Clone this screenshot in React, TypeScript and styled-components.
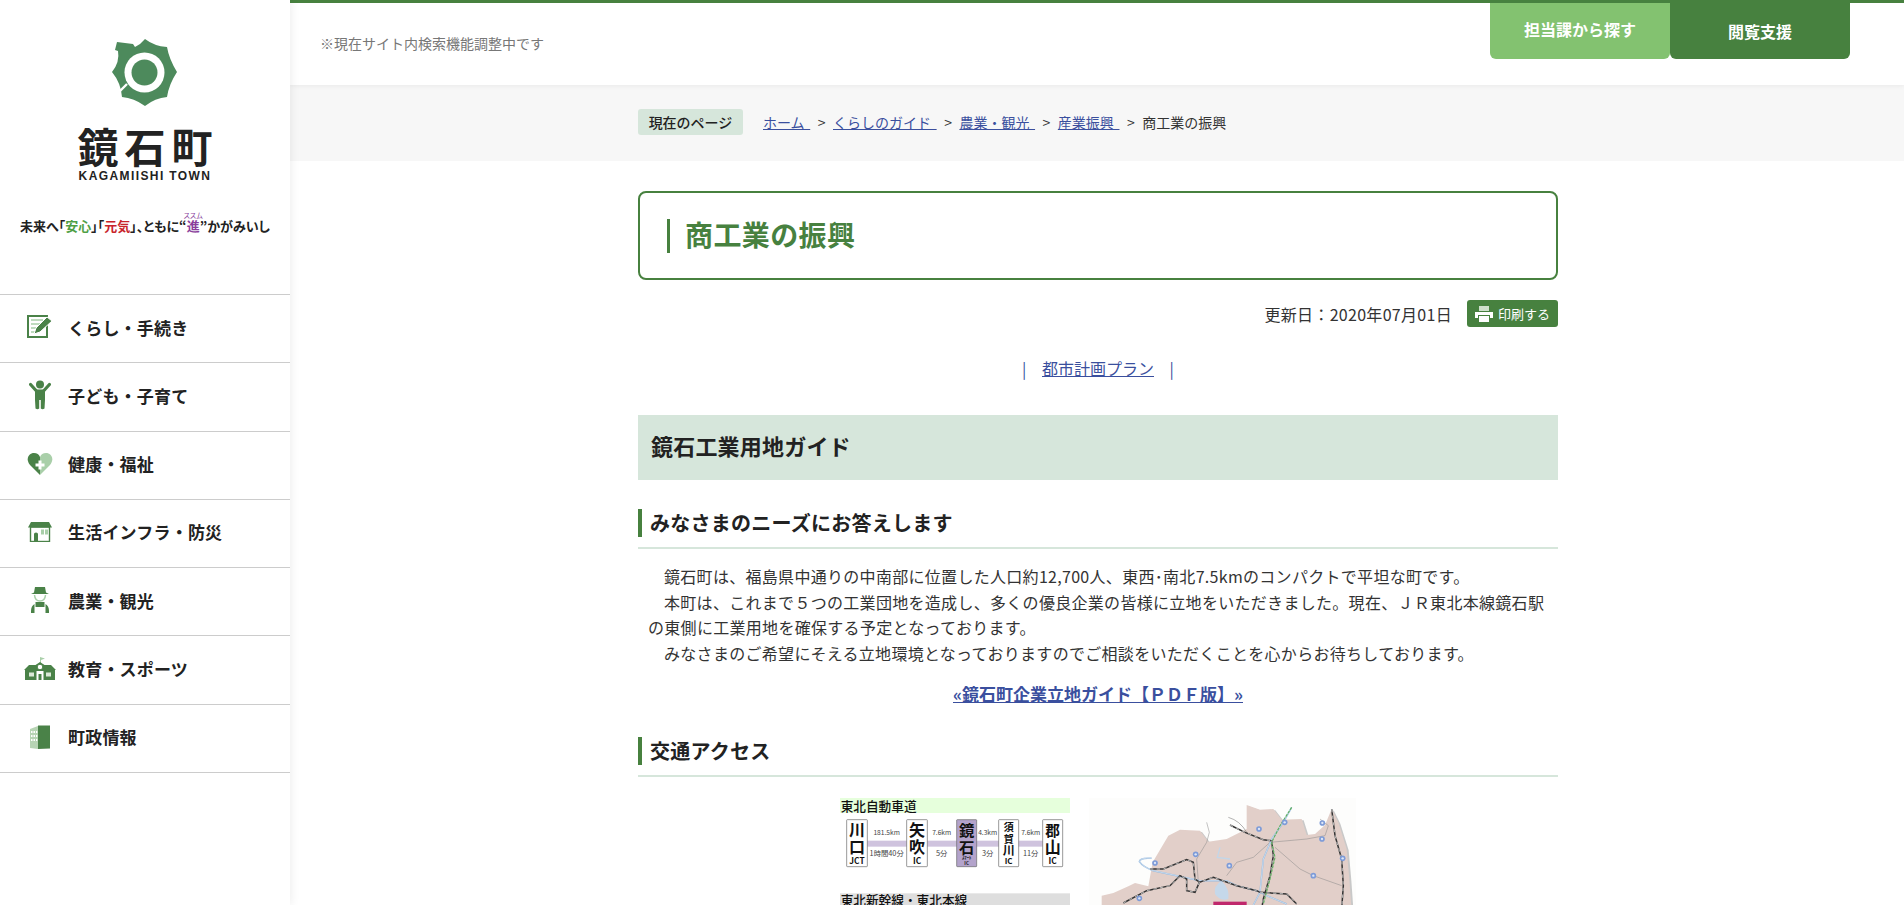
import React from "react";
import styled, { createGlobalStyle } from "styled-components";

const G = "#47813f";
const D = "#4a8248";
const L = "#a9cfa9";

const Global = createGlobalStyle`
  html, body { margin: 0; padding: 0; height: 100%; overflow: hidden; background: #fff; }
  body { font-family: "Noto Sans CJK JP", "Noto Sans", sans-serif; color: #333; }
  * { box-sizing: border-box; }
  a { color: #3a4f9e; }
`;

const Page = styled.div`
  display: flex;
  height: 905px;
  overflow: hidden;
`;
const Sidebar = styled.aside`
  width: 290px;
  flex: none;
  background: #fff;
  box-shadow: 0 0 10px rgba(0, 0, 0, 0.09);
  position: relative;
  z-index: 2;
  padding-top: 39px;
`;
const LogoBlock = styled.div`
  display: flex;
  flex-direction: column;
  align-items: center;
  height: 255px;
`;
const LogoName = styled.div`
  font-size: 41px;
  line-height: 44px;
  font-weight: 700;
  letter-spacing: 6px;
  margin: 16px 0 0 6px;
  color: #222;
`;
const LogoSub = styled.div`
  font-family: "Liberation Sans", sans-serif;
  font-size: 12px;
  line-height: 14px;
  font-weight: 700;
  letter-spacing: 1.4px;
  color: #222;
  margin-top: 2px;
`;
const Slogan = styled.div`
  font-size: 13px;
  line-height: 20px;
  font-weight: 700;
  font-feature-settings: "palt";
  color: #222;
  margin-top: 28px;
  white-space: nowrap;
`;
const Tone = styled.span<{ $c: string }>`
  color: ${(p) => p.$c};
`;
const Ruby = styled.ruby`
  color: #8a3f9c;
  rt {
    font-size: 7px;
    font-weight: 400;
    line-height: 7px;
  }
`;
const Nav = styled.nav`
  border-bottom: 1px solid #ccc;
`;
const NavRow = styled.a`
  display: flex;
  align-items: center;
  height: 68.25px;
  border-top: 1px solid #ccc;
  padding-bottom: 3px;
  color: #222;
  font-size: 17px;
  letter-spacing: 0.2px;
  font-weight: 700;
  text-decoration: none;
`;
const NavIcon = styled.span`
  width: 68px;
  flex: none;
  display: flex;
  justify-content: center;
  padding-left: 12px;
`;

const Main = styled.main`
  flex: 1;
  min-width: 0;
`;
const Header = styled.header`
  height: 85px;
  border-top: 3px solid ${G};
  display: flex;
  justify-content: space-between;
  background: #fff;
  padding: 0 54px 0 30px;
  box-shadow: 0 0 6px rgba(0, 0, 0, 0.08);
  position: relative;
`;
const Notice = styled.p`
  margin: 30px 0 0;
  font-size: 14px;
  line-height: 20px;
  color: #777;
`;
const Tabs = styled.div`
  display: flex;
  height: 56px;
`;
const Tab = styled.a<{ $bg: string; $pad: number }>`
  width: 180px;
  background: ${(p) => p.$bg};
  border-radius: 0 0 6px 6px;
  color: #fff;
  font-size: 16px;
  font-weight: 700;
  text-align: center;
  line-height: 20px;
  padding-top: ${(p) => p.$pad}px;
`;
const CrumbBand = styled.div`
  height: 76px;
  background: #f7f7f7;
  padding-left: 348px;
`;
const Crumbs = styled.div`
  width: 920px;
  height: 74px;
  display: flex;
  align-items: center;
  font-size: 14px;
  color: #333;
  white-space: pre;
`;
const Badge = styled.span`
  width: 105px;
  height: 26px;
  line-height: 26px;
  text-align: center;
  background: #d6e6db;
  border-radius: 3px;
  color: #222;
  font-size: 14px;
  font-weight: 500;
  margin-right: 20px;
`;
const CrumbLink = styled.a`
  word-spacing: 2.5px;
`;
const Sep = styled.span`
  margin: 0 7.5px;
`;

const Content = styled.div`
  width: 920px;
  margin-left: 348px;
  padding-top: 30px;
`;
const TitleBox = styled.div`
  height: 89px;
  border: 2px solid ${G};
  border-radius: 8px;
  display: flex;
  align-items: center;
  padding-left: 27px;
`;
const Title = styled.h1`
  margin: 0;
  border-left: 3px solid ${G};
  padding: 0 0 3px 15px;
  font-size: 28px;
  letter-spacing: 0.4px;
  line-height: 31px;
  font-weight: 700;
  color: ${G};
`;
const Meta = styled.div`
  display: flex;
  justify-content: flex-end;
  align-items: center;
  gap: 15px;
  margin-top: 20px;
  height: 27px;
  font-size: 16px;
  letter-spacing: 0.3px;
  color: #333;
`;
const PrintBtn = styled.a`
  width: 91px;
  height: 27px;
  background: ${G};
  border-radius: 3px;
  color: #fff;
  font-size: 13px;
  letter-spacing: 0;
  display: flex;
  align-items: center;
  justify-content: center;
  gap: 5px;
`;
const LinkLine = styled.p`
  margin: 28px 0 0;
  height: 26px;
  font-size: 16px;
  line-height: 26px;
  text-align: center;
  color: #3a4f9e;
  word-spacing: 12px;
`;
const Band = styled.h2`
  margin: 34px 0 0;
  height: 65px;
  background: #d6e6db;
  padding-left: 13px;
  font-size: 22px;
  letter-spacing: 0.2px;
  line-height: 61px;
  font-weight: 700;
  color: #222;
`;
const Section = styled.h3<{ $top: number }>`
  margin: ${(p) => p.$top}px 0 0;
  padding: 0 0 10px 0;
  border-bottom: 2px solid #d6e6db;
  font-size: 20px;
  letter-spacing: 0.25px;
  font-weight: 700;
  color: #222;
`;
const SectionText = styled.span`
  display: block;
  border-left: 4px solid ${G};
  padding-left: 8px;
  line-height: 28px;
`;
const Body = styled.div`
  padding: 15px 0 0 10px;
  font-size: 16px;
  line-height: 25.6px;
  letter-spacing: 0.3px;
  color: #333;
  white-space: nowrap;
`;
const Para = styled.p`
  margin: 0;
  text-indent: 16px;
`;
const PdfLink = styled.p`
  margin: 15px 0 0;
  text-align: center;
  font-size: 17px;
  line-height: 26px;
  font-weight: 700;
`;
const Figures = styled.div`
  display: flex;
  justify-content: center;
  gap: 19px;
  margin-top: 21px;
`;

const Logo = () => (
  <svg width="68" height="68" viewBox="0 0 68 68">
    <path
      fill="#4d8a5c"
      d="M34 0 Q43 7 56 8 Q58 20 66 33 Q58 45 56 58 Q44 59 34 67 Q23 59 11 58 Q10 44 1 33 Q9 23 7 12 L4 11 L6 3 L22 5 L24 8 Q30 5 34 0Z"
    />
    <circle cx="33.5" cy="33.5" r="20" fill="#fff" />
    <circle cx="33.5" cy="33.5" r="13" fill="#4d8a5c" />
    <path d="M16 45 L9 52" stroke="#fff" strokeWidth="2.4" />
  </svg>
);

const IconForm = () => (
  <svg width="27" height="24" viewBox="0 0 27 24">
    <rect x="1" y="1" width="19" height="21" fill="#fff" stroke={D} strokeWidth="2" />
    <path d="M4 5h12M4 9h9M4 13h6M4 17h4" stroke={L} strokeWidth="1.5" />
    <path d="M7 19 L9 13 L20 2 L25 6 L13 17Z" fill={D} stroke="#fff" strokeWidth="1" />
  </svg>
);
const IconChild = () => (
  <svg width="22" height="30" viewBox="0 0 22 30">
    <circle cx="11" cy="4.5" r="4" fill={D} />
    <path d="M1.6 4.5 L7 10.5 M20.4 4.5 L15 10.5" stroke={D} strokeWidth="3.2" strokeLinecap="round" />
    <path d="M6 9.5 H16 V20 L15.5 28.5 Q13.5 30 11.8 28.5 V20 H10.2 V28.5 Q8.5 30 6.5 28.5 L6 20Z" fill={D} />
  </svg>
);
const IconHeart = () => (
  <svg width="26" height="24" viewBox="0 0 26 24">
    <path d="M13 23 L3 13 C-2 7 2 1 7 1 C10 1 12 2.5 13 5Z" fill={D} />
    <path d="M13 23 L23 13 C28 7 24 1 19 1 C16 1 14 2.5 13 5Z" fill={L} />
    <path d="M11.5 8.5h3v3h3v3h-3v3h-3v-3h-3v-3h3z" fill="#fff" />
  </svg>
);
const IconShop = () => (
  <svg width="24" height="20" viewBox="0 0 24 20">
    <path d="M3 0H21L24 5.5H0Z" fill={D} />
    <rect x="2.5" y="5" width="19" height="14.5" fill="none" stroke={D} strokeWidth="1.4" />
    <path d="M6 19.5V12Q6 10.5 8 10.5Q10 10.5 10 12V19.5Z" fill={D} />
    <path d="M13 7.5h3v5h-3zM17 7.5h3v5h-3z" fill={L} />
  </svg>
);
const IconFarmer = () => (
  <svg width="18" height="26" viewBox="0 0 18 26">
    <path d="M4 0H14L15 5.5L18 7H0L3 5.5Z" fill={D} />
    <path d="M3.5 8Q4 14 9 14Q14 14 14.5 8" fill="none" stroke={L} strokeWidth="1.5" />
    <path d="M4.5 15H13.5V20H4.5Z" fill={D} />
    <path d="M3.5 17V26H0V24Q0 19 3.5 17ZM14.5 17V26H18V24Q18 19 14.5 17Z" fill={D} />
  </svg>
);
const IconSchool = () => (
  <svg width="32" height="23" viewBox="0 0 32 23">
    <path d="M16 6V0L21 1.5L17 3V6Z" fill={L} />
    <path d="M16 5L20.5 8H27L32 13H0L5 8H11.5Z" fill={D} />
    <rect x="1" y="13" width="30" height="10" fill={D} />
    <circle cx="16" cy="10" r="2.8" fill="#fff" stroke={D} />
    <path d="M12.5 23V14H19.5V23Z" fill="#fff" />
    <path d="M14.5 23V17H17.5V23Z" fill={D} />
    <path d="M5 15.5h5v4H5zM22 15.5h5v4h-5z" fill="#dbe9d8" />
  </svg>
);
const IconBuilding = () => (
  <svg width="20" height="24" viewBox="0 0 20 24">
    <path d="M0 4L8 1V24L0 23Z" fill="#b7d4b4" />
    <path d="M8 0.5L20 .5V23.5L8 24Z" fill={D} />
    <path
      d="M1 6h1.5v2H1zM3.5 6H5v2H3.5zM6 6h1.3v2H6zM1 10h1.5v2H1zM3.5 10H5v2H3.5zM6 10h1.3v2H6zM1 14h1.5v2H1zM3.5 14H5v2H3.5zM6 14h1.3v2H6z"
      fill="#fff"
    />
  </svg>
);
const IconPrint = () => (
  <svg width="18" height="16" viewBox="0 0 18 16">
    <path d="M4 0H14V5H4Z" fill="#cfe0cc" />
    <path d="M0 6H18V12H15V9H3V12H0Z" fill="#fff" />
    <path d="M4 10H14V16H4Z" fill="#fff" />
  </svg>
);

const Box = ({ x, w, lines, fill = "#fff" }: { x: number; w: number; lines: [string, number, number][]; fill?: string }) => (
  <g>
    <rect x={x} y="122" width={w} height="141" fill={fill} stroke="#666" strokeWidth="2" rx="2" />
    {lines.map(([t, y, s], i) => (
      <text key={i} x={x + w / 2} y={y} fontSize={s} fontWeight="700" textAnchor="middle" fill="#111">
        {t}
      </text>
    ))}
  </g>
);
const Span = ({ x, a, b }: { x: number; a: string; b: string }) => (
  <g>
    <text x={x} y="167" fontSize="20" textAnchor="middle" fill="#444">{a}</text>
    <text x={x} y="232" fontSize="22" textAnchor="middle" fill="#444">{b}</text>
  </g>
);
const Diagram = () => (
  <svg width="230" height="107" viewBox="60 57 690 321" fontFamily='"Noto Sans CJK JP", sans-serif'>
    <rect x="60" y="57" width="690" height="45" fill="#e6ffdc" />
    <text x="62" y="95" fontSize="38" fontWeight="500" fill="#111">東北自動車道</text>
    <rect x="140" y="185" width="530" height="18" fill="#cfc3de" />
    <Span x="200" a="181.5km" b="1時間40分" />
    <Span x="365" a="7.6km" b="5分" />
    <Span x="503" a="4.3km" b="3分" />
    <Span x="632" a="7.6km" b="11分" />
    <Box x={80} w={62} lines={[["川", 172, 48], ["口", 222, 48], ["JCT", 256, 25]]} />
    <Box x={260} w={62} lines={[["矢", 172, 48], ["吹", 222, 48], ["IC", 254, 25]]} />
    <Box x={410} w={60} fill="#b3a3cb" lines={[["鏡", 172, 46], ["石", 222, 46], ["ｽﾏｰﾄ", 240, 14], ["IC", 258, 14]]} />
    <Box x={536} w={60} lines={[["須", 156, 30], ["賀", 192, 30], ["川", 228, 36], ["IC", 256, 24]]} />
    <Box x={668} w={60} lines={[["郡", 172, 44], ["山", 222, 48], ["IC", 254, 25]]} />
    <rect x="60" y="343" width="690" height="40" fill="#dedede" />
    <text x="62" y="378" fontSize="38" fontWeight="500" fill="#111">東北新幹線・東北本線</text>
  </svg>
);

const LAND =
  "M65 350 L100 342 L145 322 L165 312 L205 322 L218 250 L265 170 L300 152 L360 155 L385 188 L440 180 L500 150 L500 78 L540 92 L580 90 L605 122 L665 120 L680 168 L705 165 L735 138 L755 90 L775 130 L800 210 L808 300 L815 400 L65 400Z";
const RAILS = [
  "M450 138 L495 160 L550 182 L575 185",
  "M575 185 L580 230 L570 290 L550 360 L545 390",
  "M755 90 L765 170 L785 240 L790 320 L785 390",
  "M210 270 L250 270 L320 242 L340 250 L345 300 L360 310",
  "M130 372 L200 335 L270 320 L300 290 L320 300 L320 335 L345 340 L358 310 L400 295 L470 320 L530 335 L540 340 L620 345 L650 375",
];
const WATER =
  "M635 85 L610 130 L575 180 L550 240 L540 340 L520 378 M215 238 Q180 235 178 248 Q190 265 220 275 L290 290 L360 305 L440 305 L470 320 L530 335 L560 350 L620 375";
const Map = () => (
  <svg width="267" height="107" viewBox="27 57 801 321">
    <rect x="27" y="57" width="801" height="321" fill="#fdfdfc" />
    <path d={LAND} fill="#c9c9c9" transform="translate(6 4)" />
    <path d={LAND} fill="#e2cfc9" />
    <path d="M380 130 L388 160 L380 190 L350 240 L355 310" fill="none" stroke="#888" strokeWidth="1.5" />
    <path d="M445 115 Q480 125 500 160" fill="none" stroke="#666" strokeWidth="1.5" />
    <path d="M440 290 L470 250 L520 235 L570 190 L680 180 L735 170 L745 140 L720 120" fill="none" stroke="#888" strokeWidth="1.5" />
    <path d="M585 205 L660 270 L700 290 L785 320" fill="none" stroke="#888" strokeWidth="1.5" />
    <path d="M420 205 L412 235 L450 240" fill="none" stroke="#c3d6e8" strokeWidth="4" />
    <path d="M425 305 Q400 320 405 345 Q420 368 445 360 Q450 330 425 305Z" fill="#c5d8ea" />
    <path d={WATER} fill="none" stroke="#8db4dc" strokeWidth="4.5" />
    <path d={WATER} fill="none" stroke="#fff" strokeWidth="1.5" />
    {RAILS.map((d) => (
      <g key={d}>
        <path d={d} fill="none" stroke="#333" strokeWidth="4.5" />
        <path d={d} fill="none" stroke="#fff" strokeWidth="2" strokeDasharray="10 10" />
      </g>
    ))}
    <path d="M635 85 L600 140 L575 190 L585 235 L570 300 L550 375" fill="none" stroke="#5fb060" strokeWidth="3.5" strokeDasharray="9 3" />
    {[[614, 130], [537, 150], [727, 132], [726, 180], [788, 238], [347, 226], [225, 252], [448, 260], [700, 290], [178, 358]].map(([x, y]) => (
      <g key={`${x}-${y}`}>
        <circle cx={x} cy={y} r="8.5" fill="#7d9bd8" />
        <circle cx={x} cy={y} r="3.5" fill="#dfe7f6" />
      </g>
    ))}
    <rect x="400" y="368" width="100" height="12" fill="#c0286c" />
  </svg>
);

export default function App() {
  return (
    <Page>
      <Global />
      <Sidebar>
        <LogoBlock>
          <Logo />
          <LogoName>鏡石町</LogoName>
          <LogoSub>KAGAMIISHI TOWN</LogoSub>
          <Slogan>
            未来へ「<Tone $c="#4f9f45">安心</Tone>」「<Tone $c="#c8242c">元気</Tone>」、ともに“
            <Ruby>
              進<rt>ススム</rt>
            </Ruby>
            ”かがみいし
          </Slogan>
        </LogoBlock>
        <Nav>
          <NavRow><NavIcon><IconForm /></NavIcon>くらし・手続き</NavRow>
          <NavRow><NavIcon><IconChild /></NavIcon>子ども・子育て</NavRow>
          <NavRow><NavIcon><IconHeart /></NavIcon>健康・福祉</NavRow>
          <NavRow><NavIcon><IconShop /></NavIcon>生活インフラ・防災</NavRow>
          <NavRow><NavIcon><IconFarmer /></NavIcon>農業・観光</NavRow>
          <NavRow><NavIcon><IconSchool /></NavIcon>教育・スポーツ</NavRow>
          <NavRow><NavIcon><IconBuilding /></NavIcon>町政情報</NavRow>
        </Nav>
      </Sidebar>
      <Main>
        <Header>
          <Notice>※現在サイト内検索機能調整中です</Notice>
          <Tabs>
            <Tab $bg="#83c270" $pad={16}>担当課から探す</Tab>
            <Tab $bg={G} $pad={18}>閲覧支援</Tab>
          </Tabs>
        </Header>
        <CrumbBand>
          <Crumbs>
            <Badge>現在のページ</Badge>
            <CrumbLink href="#">ホーム </CrumbLink><Sep>&gt;</Sep>
            <CrumbLink href="#">くらしのガイド </CrumbLink><Sep>&gt;</Sep>
            <CrumbLink href="#">農業・観光 </CrumbLink><Sep>&gt;</Sep>
            <CrumbLink href="#">産業振興 </CrumbLink><Sep>&gt;</Sep>
            <span>商工業の振興</span>
          </Crumbs>
        </CrumbBand>
        <Content>
          <TitleBox><Title>商工業の振興</Title></TitleBox>
          <Meta>
            <span>更新日：2020年07月01日</span>
            <PrintBtn><IconPrint />印刷する</PrintBtn>
          </Meta>
          <LinkLine>| <a href="#">都市計画プラン</a> |</LinkLine>
          <Band>鏡石工業用地ガイド</Band>
          <Section $top={29}><SectionText>みなさまのニーズにお答えします</SectionText></Section>
          <Body>
            <Para>鏡石町は、福島県中通りの中南部に位置した人口約12,700人、東西･南北7.5kmのコンパクトで平坦な町です。</Para>
            <Para>
              本町は、これまで５つの工業団地を造成し、多くの優良企業の皆様に立地をいただきました。現在、ＪＲ東北本線鏡石駅
              <br />
              の東側に工業用地を確保する予定となっております。
            </Para>
            <Para>みなさまのご希望にそえる立地環境となっておりますのでご相談をいただくことを心からお待ちしております。</Para>
          </Body>
          <PdfLink><a href="#">«鏡石町企業立地ガイド【ＰＤＦ版】»</a></PdfLink>
          <Section $top={30}><SectionText>交通アクセス</SectionText></Section>
          <Figures>
            <Diagram />
            <Map />
          </Figures>
        </Content>
      </Main>
    </Page>
  );
}
